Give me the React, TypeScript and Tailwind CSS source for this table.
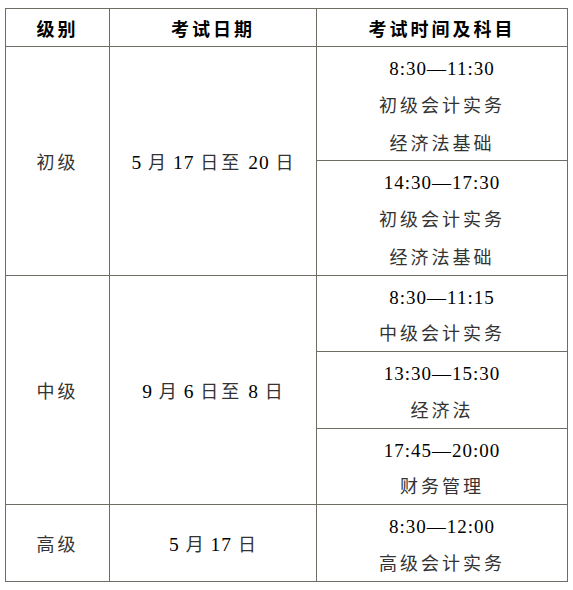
import React from "react";

const font = { fontFamily: '"Liberation Serif", "Noto Sans CJK SC", serif' };

function Line({ children, num }: { children: React.ReactNode; num?: boolean }) {
  return (
    <div className={num ? "leading-[37.75px] tracking-[1px] text-[19px] text-black" : "leading-[37.75px] tracking-[3px] text-[18px] text-[#333]"}>
      {children}
    </div>
  );
}

function Cell({ children }: { children: React.ReactNode }) {
  return <div className="translate-y-[3px]">{children}</div>;
}

const td = "border border-[#6f6d63] text-center align-middle p-0";
const th = "border border-[#6f6d63] text-center align-middle p-0 font-bold text-[18px] tracking-[3px] leading-[37px] text-black";

export default function App() {
  return (
    <div className="bg-white w-[573px] h-[590px] pt-[8px] pl-[5px]" style={font}>
      <table className="border-collapse w-[562px] table-fixed">
        <colgroup>
          <col className="w-[104px]" />
          <col className="w-[207px]" />
          <col className="w-[251px]" />
        </colgroup>
        <thead>
          <tr>
            <th className={th}><Cell>级别</Cell></th>
            <th className={th}><Cell>考试日期</Cell></th>
            <th className={th}><Cell>考试时间及科目</Cell></th>
          </tr>
        </thead>
        <tbody>
          <tr>
            <td rowSpan={2} className={td}><Cell><Line>初级</Line></Cell></td>
            <td rowSpan={2} className={td}>
              <Cell>
                <div className="leading-[37.75px] text-[19.5px] text-black tracking-[1px]">5 <span className="text-[18px] text-[#333]">月</span> 17 <span className="text-[18px] text-[#333] tracking-[3px]">日至</span> 20 <span className="text-[18px] text-[#333]">日</span></div>
              </Cell>
            </td>
            <td className={td}>
              <Cell>
                <Line num>8:30—11:30</Line>
                <Line>初级会计实务</Line>
                <Line>经济法基础</Line>
              </Cell>
            </td>
          </tr>
          <tr>
            <td className={td}>
              <Cell>
                <Line num>14:30—17:30</Line>
                <Line>初级会计实务</Line>
                <Line>经济法基础</Line>
              </Cell>
            </td>
          </tr>
          <tr>
            <td rowSpan={3} className={td}><Cell><Line>中级</Line></Cell></td>
            <td rowSpan={3} className={td}>
              <Cell>
                <div className="leading-[37.75px] text-[19.5px] text-black tracking-[1px]">9 <span className="text-[18px] text-[#333]">月</span> 6 <span className="text-[18px] text-[#333] tracking-[3px]">日至</span> 8 <span className="text-[18px] text-[#333]">日</span></div>
              </Cell>
            </td>
            <td className={td}>
              <Cell>
                <Line num>8:30—11:15</Line>
                <Line>中级会计实务</Line>
              </Cell>
            </td>
          </tr>
          <tr>
            <td className={td}>
              <Cell>
                <Line num>13:30—15:30</Line>
                <Line>经济法</Line>
              </Cell>
            </td>
          </tr>
          <tr>
            <td className={td}>
              <Cell>
                <Line num>17:45—20:00</Line>
                <Line>财务管理</Line>
              </Cell>
            </td>
          </tr>
          <tr>
            <td className={td}><Cell><Line>高级</Line></Cell></td>
            <td className={td}>
              <Cell>
                <div className="leading-[37.75px] text-[19.5px] text-black tracking-[1px]">5 <span className="text-[18px] text-[#333]">月</span> 17 <span className="text-[18px] text-[#333]">日</span></div>
              </Cell>
            </td>
            <td className={td}>
              <Cell>
                <Line num>8:30—12:00</Line>
                <Line>高级会计实务</Line>
              </Cell>
            </td>
          </tr>
        </tbody>
      </table>
    </div>
  );
}
